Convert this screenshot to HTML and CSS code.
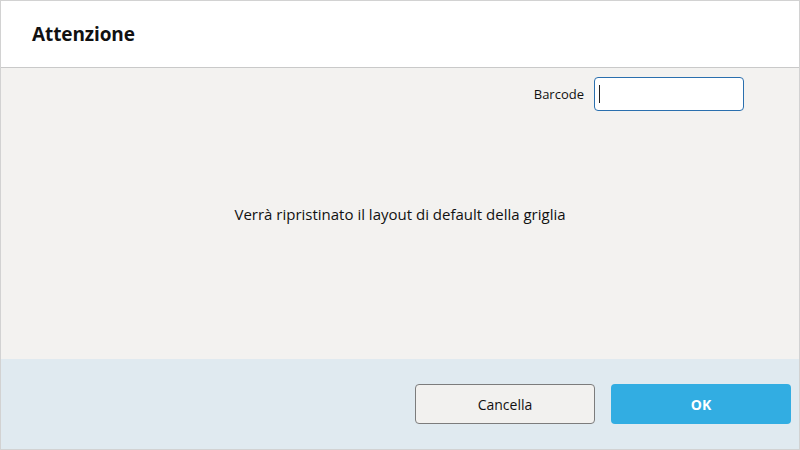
FILE: index.html
```html
<!DOCTYPE html>
<html lang="it">
<head>
  <meta charset="UTF-8" />
  <title>Attenzione</title>
  <link rel="stylesheet" href="styles.css">
</head>
<body>

  <div class="dialogo">
    <div class="intestazione">
      <h1>Attenzione</h1>
    </div>

    <div class="contenuto">
      <div class="riga-barcode">
        <label for="barcode">Barcode</label>
        <div class="campo"><span class="cursore"></span></div>
      </div>

      <div class="messaggio">Verrà ripristinato il layout di default della griglia</div>
    </div>

    <div class="piede">
      <button class="btn btn-annulla">Cancella</button>
      <button class="btn btn-ok">OK</button>
    </div>
  </div>

</body>
</html>
```

FILE: styles.css
```css
body {
  margin: 0;
  padding: 0;
  font-family: 'Open Sans', 'Noto Sans', sans-serif;
  color: #111;
}

.dialogo {
  width: 800px;
  height: 450px;
  box-sizing: border-box;
  border: 1px solid #d2d2d2;
  display: flex;
  flex-direction: column;
  background: #f3f2f0;
}

/* Intestazione */
.intestazione {
  height: 66px;
  background: #fff;
  border-bottom: 1px solid #c9c9c9;
  display: flex;
  align-items: center;
  padding-left: 31px;
}

.intestazione h1 {
  margin: 0;
  font-size: 19px;
  font-weight: bold;
  letter-spacing: -0.1px;
}

/* Contenuto */
.contenuto {
  flex: 1;
  display: flex;
  flex-direction: column;
}

.riga-barcode {
  display: flex;
  justify-content: flex-end;
  align-items: center;
  gap: 10px;
  padding: 9px 55px 0 0;
}

.riga-barcode label {
  font-size: 13px;
}

.campo {
  width: 150px;
  height: 34px;
  box-sizing: border-box;
  background: #fff;
  border: 1px solid #2a6fae;
  border-radius: 4px;
  display: flex;
  align-items: center;
  padding-left: 4px;
}

.cursore {
  width: 1px;
  height: 18px;
  background: #222;
}

.messaggio {
  text-align: center;
  font-size: 15px;
  margin-top: 93px;
}

/* Piede */
.piede {
  height: 90px;
  background: #e0eaf0;
  display: flex;
  justify-content: flex-end;
  align-items: center;
  gap: 16px;
  padding-right: 8px;
  box-sizing: border-box;
}

.btn {
  width: 180px;
  height: 40px;
  border-radius: 4px;
  font-family: 'Open Sans', 'Noto Sans', sans-serif;
  font-size: 14px;
  cursor: pointer;
}

.btn-annulla {
  background: #f2f1ef;
  border: 1px solid #7c7c7c;
  color: #111;
}

.btn-ok {
  background: #32ade2;
  border: none;
  color: #fff;
  font-weight: bold;
}
```
